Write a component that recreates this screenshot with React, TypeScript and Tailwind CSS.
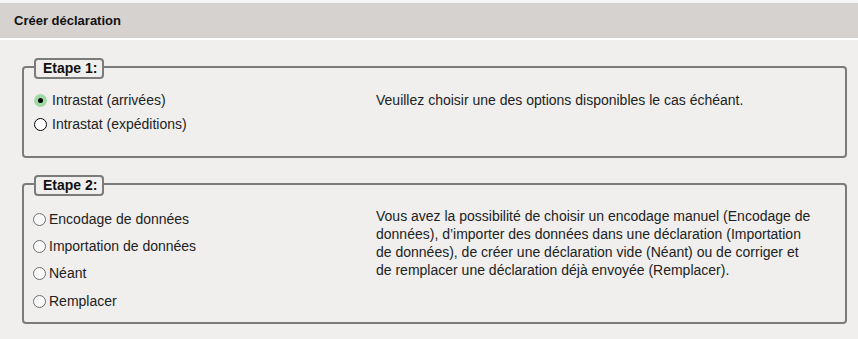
import type { ReactNode } from "react";

const font = { fontFamily: '"Liberation Sans", Arial, sans-serif' };

function Radio({ variant }: { variant: "checked" | "empty" | "soft" }) {
  if (variant === "checked") {
    return (
      <span className="flex h-[13px] w-[13px] shrink-0 items-center justify-center rounded-full bg-[#a2d8a4]">
        <span className="h-[5px] w-[5px] rounded-full bg-black" />
      </span>
    );
  }
  if (variant === "empty") {
    return <span className="h-[13px] w-[13px] shrink-0 rounded-full border-[1.5px] border-black bg-white" />;
  }
  return <span className="h-[13px] w-[13px] shrink-0 rounded-full border border-[#6f6f6f] bg-[#f8f8f8]" />;
}

function Step({
  label,
  height,
  children,
}: {
  label: string;
  height: string;
  children: ReactNode;
}) {
  return (
    <div className={`relative rounded-[4px] border-2 border-[#7b7b7b] ${height}`}>
      <span className="absolute left-[10px] top-[-10px] flex h-[21px] items-center rounded-[4px] border-2 border-[#7b7b7b] bg-[#f0efee] pl-[7px] pr-[5px] text-[14px] font-bold text-[#111]">
        {label}
      </span>
      {children}
    </div>
  );
}

const step2Options = ["Encodage de données", "Importation de données", "Néant", "Remplacer"];

export default function App() {
  return (
    <div className="h-[339px] w-full overflow-hidden bg-[#f0efee] text-[#222]" style={font}>
      <div className="h-[3px] bg-[#f6f6f6]" />
      <div className="flex h-[35px] items-center bg-[#d5d2cf] px-[14px] text-[13px] font-bold text-[#111]">
        Créer déclaration
      </div>
      <div className="h-[2px] bg-white" />

      <div className="pl-[22px] pr-[11px] pt-[26px]">
        <Step label="Etape 1:" height="h-[92px]">
          <div className="flex pl-[10px] pt-[20px] text-[14px]">
            <div className="w-[342px]">
              <div className="flex h-[24px] items-center gap-[5px]">
                <Radio variant="checked" />
                <span>Intrastat (arrivées)</span>
              </div>
              <div className="flex h-[24px] items-center gap-[5px]">
                <Radio variant="empty" />
                <span>Intrastat (expéditions)</span>
              </div>
            </div>
            <p className="leading-[24px]">Veuillez choisir une des options disponibles le cas échéant.</p>
          </div>
        </Step>

        <div className="mt-[25px]">
          <Step label="Etape 2:" height="h-[141px]">
            <div className="flex pl-[9px] pt-[20.5px] text-[14px]">
              <div className="w-[343px]">
                {step2Options.map((option) => (
                  <div key={option} className="flex h-[27.33px] items-center gap-[3px]">
                    <Radio variant="soft" />
                    <span>{option}</span>
                  </div>
                ))}
              </div>
              <p className="pt-[1.5px] leading-[18px]">
                Vous avez la possibilité de choisir un encodage manuel (Encodage de
                <br />
                données), d’importer des données dans une déclaration (Importation
                <br />
                de données), de créer une déclaration vide (Néant) ou de corriger et
                <br />
                de remplacer une déclaration déjà envoyée (Remplacer).
              </p>
            </div>
          </Step>
        </div>
      </div>
    </div>
  );
}
